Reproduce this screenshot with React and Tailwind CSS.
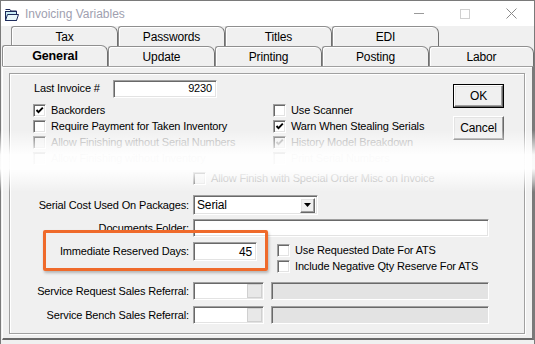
import React from "react";

const F = "font-['Liberation_Sans',Arial,sans-serif]";
const SUNKEN =
  "border border-t-[#a0a0a0] border-l-[#a0a0a0] border-b-white border-r-white shadow-[inset_1px_1px_0_#696969,inset_-1px_-1px_0_#e3e3e3]";
const RAISED =
  "border border-t-white border-l-white border-b-[#696969] border-r-[#696969] shadow-[inset_-1px_-1px_0_#a0a0a0,inset_1px_1px_0_#e3e3e3]";

function Check({ checked, disabled }) {
  return (
    <span
      className={`relative block w-[13px] h-[13px] shrink-0 ${SUNKEN} ${
        disabled ? "bg-[#f0f0f0]" : "bg-white"
      }`}
    >
      {checked && (
        <svg
          width="11"
          height="11"
          viewBox="0 0 11 11"
          className="absolute left-0 top-0"
        >
          <path
            d="M2.5 5 L4.5 7.2 L8.8 2.6"
            fill="none"
            stroke={disabled ? "#a0a0a0" : "#000"}
            strokeWidth="1.9"
          />
        </svg>
      )}
    </span>
  );
}

function CheckRow({ label, checked, disabled }) {
  return (
    <div className="h-[16px] flex items-center gap-[5px] whitespace-nowrap">
      <Check checked={checked} disabled={disabled} />
      <span className={disabled ? "text-[#a0a0a0]" : "text-black"}>{label}</span>
    </div>
  );
}

function Tab({ label, w = "w-[107px]" }) {
  return (
    <div
      className={`${w} h-full shrink-0 flex items-center justify-center text-[12px] bg-[#f0f0f0] border-t border-l border-r border-t-[#8f8f8f] border-l-[#8f8f8f] border-r-[#6f6f6f] rounded-tl-[3px] rounded-tr-[7px] shadow-[inset_1px_1px_0_#fff]`}
    >
      {label}
    </div>
  );
}

function Label({ children }) {
  return (
    <div className="w-[179px] shrink-0 text-right whitespace-nowrap">{children}</div>
  );
}

export default function App() {
  return (
    <div
      className={`relative w-[535px] h-[344px] overflow-hidden bg-[#f0f0f0] ${F} text-[11px] tracking-[-0.15px] text-black leading-none`}
    >
      <div className="h-full border-l border-r border-t border-[#7a7a7a] flex flex-col">
        {/* Title bar */}
        <div className="h-[25px] shrink-0 bg-white flex items-center tracking-normal">
          <svg width="14" height="12" viewBox="0 0 14 12" className="ml-[4px] mt-[2px]">
            <path d="M0.5 0.5 H5 L6 2 H11.5 V3.5" fill="none" stroke="#1d2a5a" />
            <rect x="0.5" y="2.5" width="11" height="9" fill="#c9ecf5" stroke="#1d2a5a" />
            <path d="M2.5 5.5 H13.5 L11.5 11.5 H0.5 Z" fill="#eaf8fb" stroke="#1d2a5a" />
          </svg>
          <span className="ml-[6px] text-[12px] text-[#a09fb0]">Invoicing Variables</span>
          <div className="ml-auto flex items-center h-full">
            <div className="w-[46px] flex justify-center">
              <div className="w-[10px] h-px bg-[#9a9a9a]" />
            </div>
            <div className="w-[46px] flex justify-center">
              <div className="w-[10px] h-[10px] border border-[#d0d0d0]" />
            </div>
            <div className="w-[46px] flex justify-center">
              <svg width="11" height="11" viewBox="0 0 11 11">
                <path d="M0.5 0.5 L10.5 10.5 M10.5 0.5 L0.5 10.5" stroke="#8a8a8a" strokeWidth="1" />
              </svg>
            </div>
          </div>
        </div>

        {/* Tabs row 1 */}
        <div className="h-[20px] shrink-0 flex pl-[10px]">
          <Tab label="Tax" />
          <Tab label="Passwords" />
          <Tab label="Titles" />
          <Tab label="EDI" />
        </div>
        {/* Tabs row 2 */}
        <div className="h-[20px] shrink-0 flex pl-[1px] relative z-10">
          <div className="w-[106px] h-[21px] shrink-0 flex items-center justify-center text-[12.5px] font-bold bg-[#f0f0f0] border-t border-l border-r border-t-[#8f8f8f] border-l-[#8f8f8f] border-r-[#6f6f6f] rounded-tl-[3px] rounded-tr-[7px] shadow-[inset_1px_1px_0_#fff] -mt-px pt-px">
            General
          </div>
          <Tab label="Update" />
          <Tab label="Printing" />
          <Tab label="Posting" />
          <Tab label="Labor" w="w-[105px]" />
        </div>

        {/* Panel */}
        <div className="ml-px w-[532px] h-[274px] shrink-0 border-t border-l border-r-2 border-b-2 border-t-[#a0a0a0] border-l-white border-r-[#7a7a7a] border-b-[#6a6a6a] shadow-[inset_0_1px_0_#fff] pt-[6px] pl-[6px]">
          {/* inner frame */}
          <div className="w-[516px] h-[261px] border border-[#a0a0a0] shadow-[inset_1px_1px_0_#fff,1px_1px_0_#fff] flex flex-col">
            {/* top section */}
            <div className="flex">
              <div className="flex-1">
                <div className="mt-[5px] h-[19px] flex items-center pl-[24px]">
                  <span className="w-[79px]">Last Invoice #</span>
                  <div className={`w-[104px] h-[18px] bg-white ${SUNKEN} flex items-center justify-end pr-[4px]`}>
                    9230
                  </div>
                </div>
                <div className="mt-[4px] pl-[23px] grid grid-cols-[240px_1fr]">
                  <CheckRow label="Backorders" checked />
                  <CheckRow label="Use Scanner" />
                  <CheckRow label="Require Payment for Taken Inventory" />
                  <CheckRow label="Warn When Stealing Serials" checked />
                  <CheckRow label="Allow Finishing without Serial Numbers" disabled />
                  <CheckRow label="History Model Breakdown" checked disabled />
                  <CheckRow label="Allow Finishing without Inventory" disabled />
                  <CheckRow label="Print Serial Numbers" disabled />
                </div>
              </div>
              <div className="w-[71px] shrink-0 pt-[10px] flex flex-col gap-[8px]">
                <div className="w-[51px] h-[24px] border border-black">
                  <div className={`w-full h-full ${RAISED} flex items-center justify-center text-[12px]`}>OK</div>
                </div>
                <div className={`w-[51px] h-[24px] ${RAISED} flex items-center justify-center text-[12px]`}>
                  Cancel
                </div>
              </div>
            </div>

            {/* Allow finish special order */}
            <div className="mt-[4px] pl-[183px]">
              <CheckRow label="Allow Finish with Special Order Misc on Invoice" disabled />
            </div>

            {/* Lower form */}
            <div className="mt-[9px] flex flex-col">
              <div className="h-[20px] flex items-center gap-[4px]">
                <Label>Serial Cost Used On Packages:</Label>
                <div className={`w-[125px] h-[20px] bg-white ${SUNKEN} flex items-center pl-[3px] pr-[2px]`}>
                  <span className="flex-1 text-[12px]">Serial</span>
                  <div className={`w-[15px] h-[15px] bg-[#f0f0f0] ${RAISED} flex items-center justify-center`}>
                    <svg width="7" height="4" viewBox="0 0 7 4">
                      <path d="M0 0 H7 L3.5 4 Z" fill="#000" />
                    </svg>
                  </div>
                </div>
              </div>
              <div className="mt-[4px] h-[18px] flex items-center gap-[4px]">
                <Label>Documents Folder:</Label>
                <div className={`w-[296px] h-[18px] bg-white ${SUNKEN}`} />
              </div>
              <div className="mt-[5px] flex gap-[4px]">
                <div className="h-[19px] flex items-center">
                  <Label>Immediate Reserved Days:</Label>
                </div>
                <div className={`w-[64px] h-[19px] bg-white ${SUNKEN} flex items-center justify-end pr-[4px] text-[12px]`}>
                  45
                </div>
                <div className="ml-[16px] flex flex-col">
                  <CheckRow label="Use Requested Date For ATS" />
                  <CheckRow label="Include Negative Qty Reserve For ATS" />
                </div>
              </div>
              <div className="mt-[8px] h-[18px] flex items-center gap-[4px]">
                <Label>Service Request Sales Referral:</Label>
                <div className={`w-[71px] h-[18px] bg-white ${SUNKEN} flex items-center justify-end pr-[1px]`}>
                  <div className="w-[15px] h-[14px] bg-[#e8e8e8] border border-[#d0d0d0]" />
                </div>
                <div className={`ml-[3px] w-[218px] h-[18px] bg-[#e3e3e3] ${SUNKEN}`} />
              </div>
              <div className="mt-[6px] h-[18px] flex items-center gap-[4px]">
                <Label>Service Bench Sales Referral:</Label>
                <div className={`w-[71px] h-[18px] bg-white ${SUNKEN} flex items-center justify-end pr-[1px]`}>
                  <div className="w-[15px] h-[14px] bg-[#e8e8e8] border border-[#d0d0d0]" />
                </div>
                <div className={`ml-[3px] w-[218px] h-[18px] bg-[#e3e3e3] ${SUNKEN}`} />
              </div>
            </div>
          </div>
        </div>
      </div>

      {/* torn / fade overlay */}
      <div className="pointer-events-none absolute left-0 right-0 top-[130px] h-[62px] bg-[linear-gradient(to_bottom,rgba(255,255,255,0)_0%,rgba(255,255,255,0.5)_21%,rgba(255,255,255,0.95)_40%,rgba(255,255,255,0.96)_62%,rgba(255,255,255,0.55)_80%,rgba(255,255,255,0)_100%)]" />

      {/* orange highlight */}
      <div className="pointer-events-none absolute left-[43px] top-[230px] w-[225px] h-[41px] border-[3px] border-[#ef6a2b] rounded-[2px] shadow-[1px_2px_3px_rgba(0,0,0,0.25)]" />
    </div>
  );
}
